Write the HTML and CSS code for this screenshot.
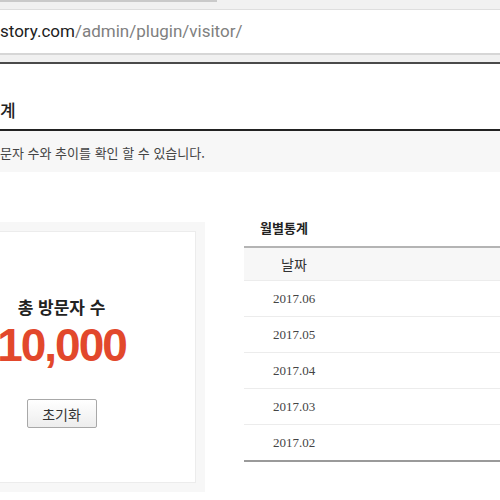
FILE: index.html
```html
<!DOCTYPE html>
<html lang="ko">
<head>
    <meta charset="UTF-8">
    <meta name="viewport" content="width=device-width, initial-scale=1.0">
    <title>방문자 통계</title>
    <link rel="stylesheet" href="styles.css">
</head>
<body>

<div class="browser-top">
    <div class="tab-bar"></div>
</div>
<div class="url-bar">
    <span class="host">story.com</span><span class="path">/admin/plugin/visitor/</span>
</div>
<div class="toolbar-gap"></div>

<div class="page">
    <h2 class="page-title">계</h2>
    <p class="page-desc">문자 수와 추이를 확인 할 수 있습니다.</p>

    <div class="content">
        <div class="total-card">
            <div class="total-inner">
                <div class="total-label">총 방문자 수</div>
                <div class="total-count">10,000</div>
                <button class="reset-btn">초기화</button>
            </div>
        </div>

        <div class="monthly">
            <h3 class="monthly-title">월별통계</h3>
            <table class="monthly-table">
                <thead>
                    <tr><th class="col-date">날짜</th><th></th></tr>
                </thead>
                <tbody>
                    <tr><td class="col-date">2017.06</td><td></td></tr>
                    <tr><td class="col-date">2017.05</td><td></td></tr>
                    <tr><td class="col-date">2017.04</td><td></td></tr>
                    <tr><td class="col-date">2017.03</td><td></td></tr>
                    <tr><td class="col-date">2017.02</td><td></td></tr>
                </tbody>
            </table>
        </div>
    </div>
</div>

</body>
</html>
```

FILE: styles.css
```css
html, body {
    margin: 0;
    padding: 0;
    background-color: #fff;
    overflow: hidden;
}
body {
    font-family: "Noto Sans CJK KR", "Liberation Sans", sans-serif;
    color: #222;
}
.browser-top {
    height: 9px;
    background-color: #f1f1f1;
    border-bottom: 1px solid #dedede;
}
.tab-bar {
    width: 217px;
    height: 2px;
    background-color: #cacaca;
}
.url-bar {
    height: 43px;
    line-height: 43px;
    background-color: #fff;
    border-bottom: 2px solid #d6d6d6;
    font-family: Roboto, "Liberation Sans", sans-serif;
    font-size: 17px;
    white-space: nowrap;
}
.url-bar .host {
    color: #212121;
}
.url-bar .path {
    color: #808080;
}
.toolbar-gap {
    height: 7px;
    background-color: #f0f0f0;
    border-bottom: 2px solid #4a4a4a;
}
.page-title {
    margin: 0;
    padding: 36px 0 9px 0;
    font-size: 17px;
    line-height: 20px;
    font-weight: 500;
    color: #222;
    border-bottom: 2px solid #222;
}
.page-desc {
    margin: 0;
    height: 41px;
    line-height: 43px;
    font-size: 13px;
    color: #444;
    background-color: #f7f7f7;
}
.content {
    display: flex;
    align-items: flex-start;
    margin-top: 50px;
}
.total-card {
    flex: none;
    width: 269px;
    margin-left: -82px;
    padding: 9px;
    background-color: #f7f7f7;
}
.total-inner {
    background-color: #fff;
    border: 1px solid #ececec;
    padding: 64px 0 54px 0;
    text-align: center;
}
.total-label {
    font-size: 17px;
    font-weight: 700;
    line-height: 22px;
    color: #222;
}
.total-count {
    margin-top: 2px;
    font-family: "Liberation Sans", Arial, sans-serif;
    font-size: 46px;
    font-weight: 700;
    line-height: 50px;
    letter-spacing: -2px;
    color: #e2482c;
}
.reset-btn {
    margin-top: 29px;
    width: 70px;
    height: 29px;
    padding: 0;
    font-family: "Noto Sans CJK KR", sans-serif;
    font-size: 14px;
    color: #333;
    background: linear-gradient(#fff, #ededed);
    border: 1px solid #a8a8a8;
    border-radius: 2px;
}
.monthly {
    flex: none;
    width: 300px;
    margin-left: 39px;
    margin-top: -2px;
}
.monthly-title {
    margin: 0 0 10px 16px;
    font-size: 13px;
    line-height: 16px;
    font-weight: 700;
    color: #222;
}
.monthly-table {
    width: 300px;
    border-collapse: collapse;
    border-top: 2px solid #b4b4b4;
    border-bottom: 2px solid #9a9a9a;
}
.monthly-table th {
    height: 32px;
    padding: 0;
    font-size: 14px;
    font-weight: 400;
    color: #333;
    background-color: #f7f7f7;
    border-bottom: 1px solid #ececec;
}
.monthly-table td {
    height: 35px;
    padding: 0;
    font-family: "Liberation Serif", "Times New Roman", serif;
    font-size: 13px;
    color: #444;
    border-bottom: 1px solid #ececec;
}
.monthly-table tbody tr:last-child td {
    border-bottom: none;
}
.col-date {
    width: 100px;
    text-align: center;
}
```
